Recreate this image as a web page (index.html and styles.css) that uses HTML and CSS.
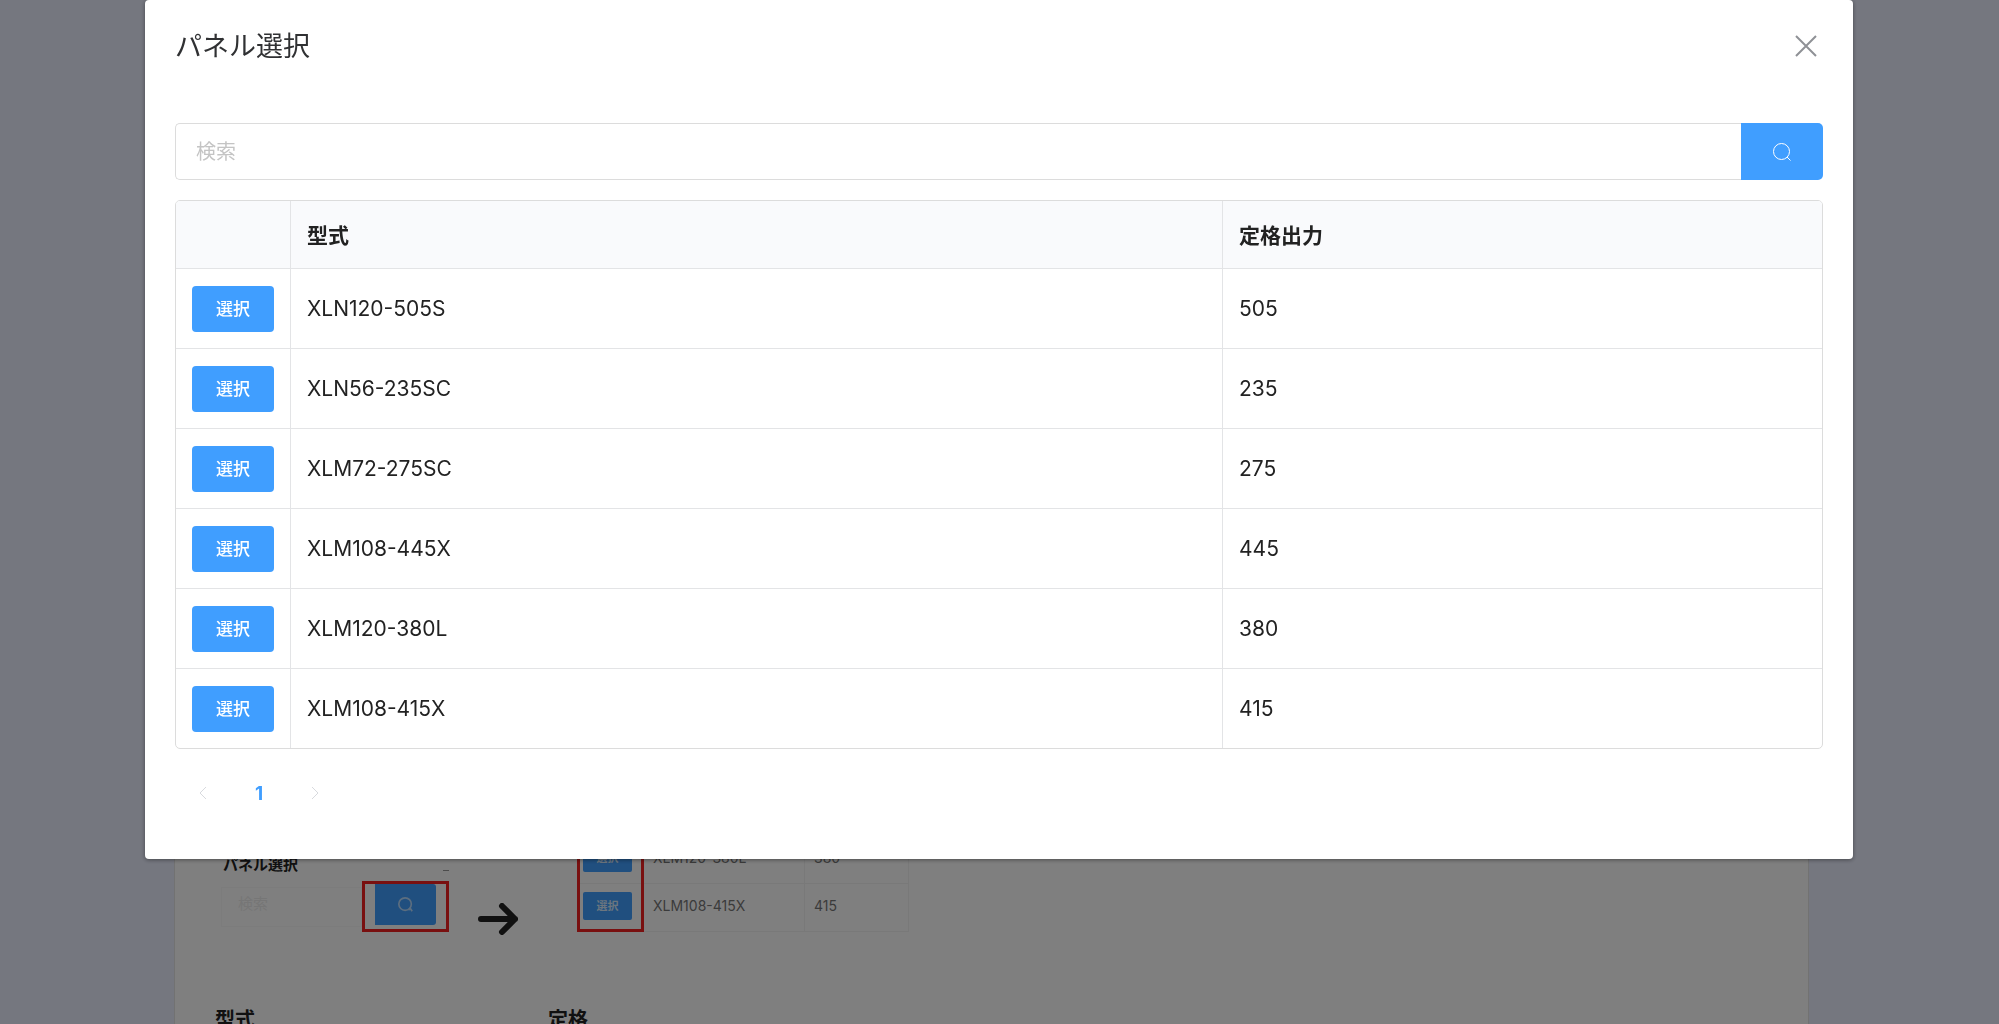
FILE: index.html
```html
<!DOCTYPE html>
<html lang="ja">
<head>
<meta charset="utf-8">
<meta name="viewport" content="width=device-width, initial-scale=1">
<title>パネル選択</title>
<link rel="stylesheet" href="styles.css">
</head>
<body>
	<!-- 背面のページ -->
	<main class="page">
		<section class="card">
			<div class="guide">
				<div class="guide-search">
					<div class="guide-head"><strong>パネル選択</strong><span class="guide-dash"></span></div>
					<div class="guide-row">
						<div class="guide-input">検索</div>
						<div class="guide-mark">
							<div class="guide-btn">
								<svg class="guide-icon" viewBox="0 0 18 18"><circle cx="8.5" cy="8.5" r="7.5"/><path d="M12.5 15.5 15 14l2 3"/></svg>
							</div>
						</div>
					</div>
				</div>
				<svg class="guide-arrow" viewBox="0 0 40 32"><path d="M3 16h34M24 3l13 13-13 13"/></svg>
				<div class="guide-list">
					<table class="guide-table">
						<tr><td><span class="guide-pick">選択</span></td><td>XLM120-380L</td><td>380</td></tr>
						<tr><td><span class="guide-pick">選択</span></td><td>XLM108-415X</td><td>415</td></tr>
					</table>
					<div class="guide-frame"></div>
				</div>
			</div>
			<div class="fields">
				<strong>型式</strong>
				<strong>定格</strong>
			</div>
		</section>
	</main>

	<!-- ダイアログ -->
	<div class="overlay">
		<div class="dialog" role="dialog" aria-modal="true" aria-labelledby="dialog-title">
			<div class="dialog-header">
				<h2 class="dialog-title" id="dialog-title">パネル選択</h2>
				<button class="close" type="button" aria-label="閉じる">
					<svg viewBox="0 0 22 22"><path d="M1 1l20 20M21 1 1 21"/></svg>
				</button>
			</div>
			<form class="search">
				<input class="search-input" type="text" placeholder="検索" aria-label="検索">
				<button class="search-btn" type="button" aria-label="検索する">
					<svg viewBox="0 0 18 18"><circle cx="8.5" cy="8.5" r="8"/><path d="M14 14l3.5 3.5"/></svg>
				</button>
			</form>
			<div class="table-box">
				<table class="table">
					<colgroup><col class="col-pick"><col><col class="col-output"></colgroup>
					<thead>
						<tr><th></th><th>型式</th><th>定格出力</th></tr>
					</thead>
					<tbody>
						<tr><td><button class="pick" type="button">選択</button></td><td>XLN120-505S</td><td>505</td></tr>
						<tr><td><button class="pick" type="button">選択</button></td><td>XLN56-235SC</td><td>235</td></tr>
						<tr><td><button class="pick" type="button">選択</button></td><td>XLM72-275SC</td><td>275</td></tr>
						<tr><td><button class="pick" type="button">選択</button></td><td>XLM108-445X</td><td>445</td></tr>
						<tr><td><button class="pick" type="button">選択</button></td><td>XLM120-380L</td><td>380</td></tr>
						<tr><td><button class="pick" type="button">選択</button></td><td>XLM108-415X</td><td>415</td></tr>
					</tbody>
				</table>
			</div>
			<nav class="pager" aria-label="ページ">
				<button type="button" disabled aria-label="前へ"><svg viewBox="0 0 8 14"><path d="M7 1 1 7l6 6"/></svg></button>
				<button class="current" type="button">1</button>
				<button type="button" disabled aria-label="次へ"><svg viewBox="0 0 8 14"><path d="M1 1l6 6-6 6"/></svg></button>
			</nav>
		</div>
	</div>
</body>
</html>
```
FILE: styles.css
```css
*{box-sizing: border-box;margin: 0;padding: 0}
html,body{
	height: 100%;
	overflow: hidden;
}
body{
	background: #eaeeff;
	color: #222;
	font-family: Inter, "Noto Sans CJK JP", sans-serif;
	font-size: 20px;
}
button,input{
	font: inherit;
	border: 0;
	background: none;
}
button{cursor: pointer}
svg{
	display: block;
	fill: none;
	stroke: currentColor;
}
table{
	border-collapse: separate;
	border-spacing: 0;
}

/* 背面のページ */
.page{
	height: 100%;
	padding: 0 190px 0 174px;
}
.card{
	min-height: 100%;
	padding: 836px 40px 0;
	background: #fff;
	border: 1px solid #e4e4e4;
	border-width: 0 1px;
}
.guide{
	display: flex;
	align-items: flex-end;
	padding-left: 6px;
}
.guide-search{width: 228px}
.guide-head{
	display: flex;
	align-items: flex-end;
	justify-content: space-between;
	padding: 0 0 6px 2px;
	font-size: 15px;
	line-height: 20px;
}
.guide-dash{
	width: 6px;
	height: 1px;
	margin-bottom: 4px;
	background: #999;
}
.guide-row{
	display: flex;
	align-items: center;
}
.guide-input{
	flex: 1;
	height: 40px;
	padding-left: 16px;
	border: 1px solid #f9f9f9;
	color: #ececec;
	font-size: 15px;
	line-height: 32px;
}
.guide-mark{
	width: 87px;
	height: 51px;
	padding: 0 10px;
	border: 3px solid #f22020;
}
.guide-btn{
	display: flex;
	align-items: center;
	justify-content: center;
	width: 61px;
	height: 41px;
	border-radius: 0 3px 3px 0;
	background: #409eff;
	color: #b8dcff;
}
.guide-icon{
	width: 15px;
	height: 15px;
	stroke-width: 2;
}
.guide-arrow{
	width: 40px;
	height: 32px;
	margin: 0 59px -3px 29px;
	stroke: #222;
	stroke-width: 6;
	stroke-linecap: round;
	stroke-linejoin: round;
}
.guide-list{position: relative}
.guide-table{
	width: 332px;
	table-layout: fixed;
	color: #777;
	font-size: 14px;
}
.guide-table td{
	height: 48px;
	padding: 0 6px 4px 9px;
	border: 1px solid #f3f3f3;
	border-width: 0 1px 1px 0;
}
.guide-table td:first-child{width: 67px;padding-left: 6px}
.guide-table td:last-child{width: 104px}
.guide-pick{
	display: block;
	width: 49px;
	border-radius: 2px;
	background: #409eff;
	color: #d9ecff;
	font-size: 11px;
	font-weight: 700;
	line-height: 28px;
	text-align: center;
}
.guide-frame{
	position: absolute;
	inset: 0 auto 0 0;
	width: 67px;
	border: 3px solid #f22020;
}
.fields{
	display: grid;
	grid-template-columns: 333px 1fr;
	padding-top: 74px;
	line-height: 28px;
}

/* ダイアログ */
.overlay{
	position: fixed;
	inset: 0;
	padding: 0 146px 0 145px;
	background: rgba(0,0,0,.5);
}
.dialog{
	padding: 0 30px 44px;
	border-radius: 4px;
	background: #fff;
	box-shadow: 0 1px 4px rgba(0,0,0,.4);
}
.dialog-header{
	display: flex;
	align-items: center;
	justify-content: space-between;
	height: 92px;
	margin-bottom: 31px;
	padding-right: 6px;
}
.dialog-title{
	padding-bottom: 3px;
	color: #303133;
	font-size: 27px;
	font-weight: 400;
}
.close{
	color: #8f9196;
}
.close svg{
	width: 22px;
	height: 22px;
	stroke-width: 2;
}
.search{
	display: flex;
	height: 57px;
	margin-bottom: 20px;
}
.search-input{
	flex: 1;
	padding: 0 20px;
	border: 1px solid #dcdcdc;
	border-right: 0;
	border-radius: 5px 0 0 5px;
}
.search-input::placeholder{color: #c4c4c4}
.search-btn{
	display: flex;
	align-items: center;
	justify-content: center;
	width: 82px;
	border-radius: 0 5px 5px 0;
	background: #409eff;
	color: #fff;
}
.search-btn svg{
	width: 18px;
	height: 18px;
}
.table-box{
	overflow: hidden;
	border: 1px solid #dcdcdc;
	border-radius: 5px;
}
.table{
	width: 100%;
	table-layout: fixed;
	font-size: 21px;
}
.col-pick{width: 115px}
.col-output{width: 599px}
.table th,.table td{
	height: 80px;
	padding: 0 16px;
	border: 1px solid #e3e4e6;
	border-width: 0 1px 1px 0;
	text-align: left;
}
.table th{
	height: 68px;
	padding-bottom: 2px;
	background: #f9fafc;
	font-weight: 700;
}
.table tr>:last-child{border-right: 0}
.table tbody tr:last-child td{
	height: 79px;
	border-bottom: 0;
}
.pick{
	display: block;
	width: 82px;
	height: 46px;
	padding-bottom: 2px;
	border-radius: 4px;
	background: #409eff;
	color: #fff;
	font-size: 17px;
	font-weight: 500;
}
.pager{
	display: flex;
	padding: 22px 0 0;
}
.pager button{
	display: flex;
	align-items: center;
	justify-content: center;
	width: 56px;
	height: 44px;
	color: #d8dade;
}
.pager svg{
	width: 8px;
	height: 14px;
}
.pager .current{
	color: #409eff;
	font-size: 19px;
	font-weight: 700;
}
```
